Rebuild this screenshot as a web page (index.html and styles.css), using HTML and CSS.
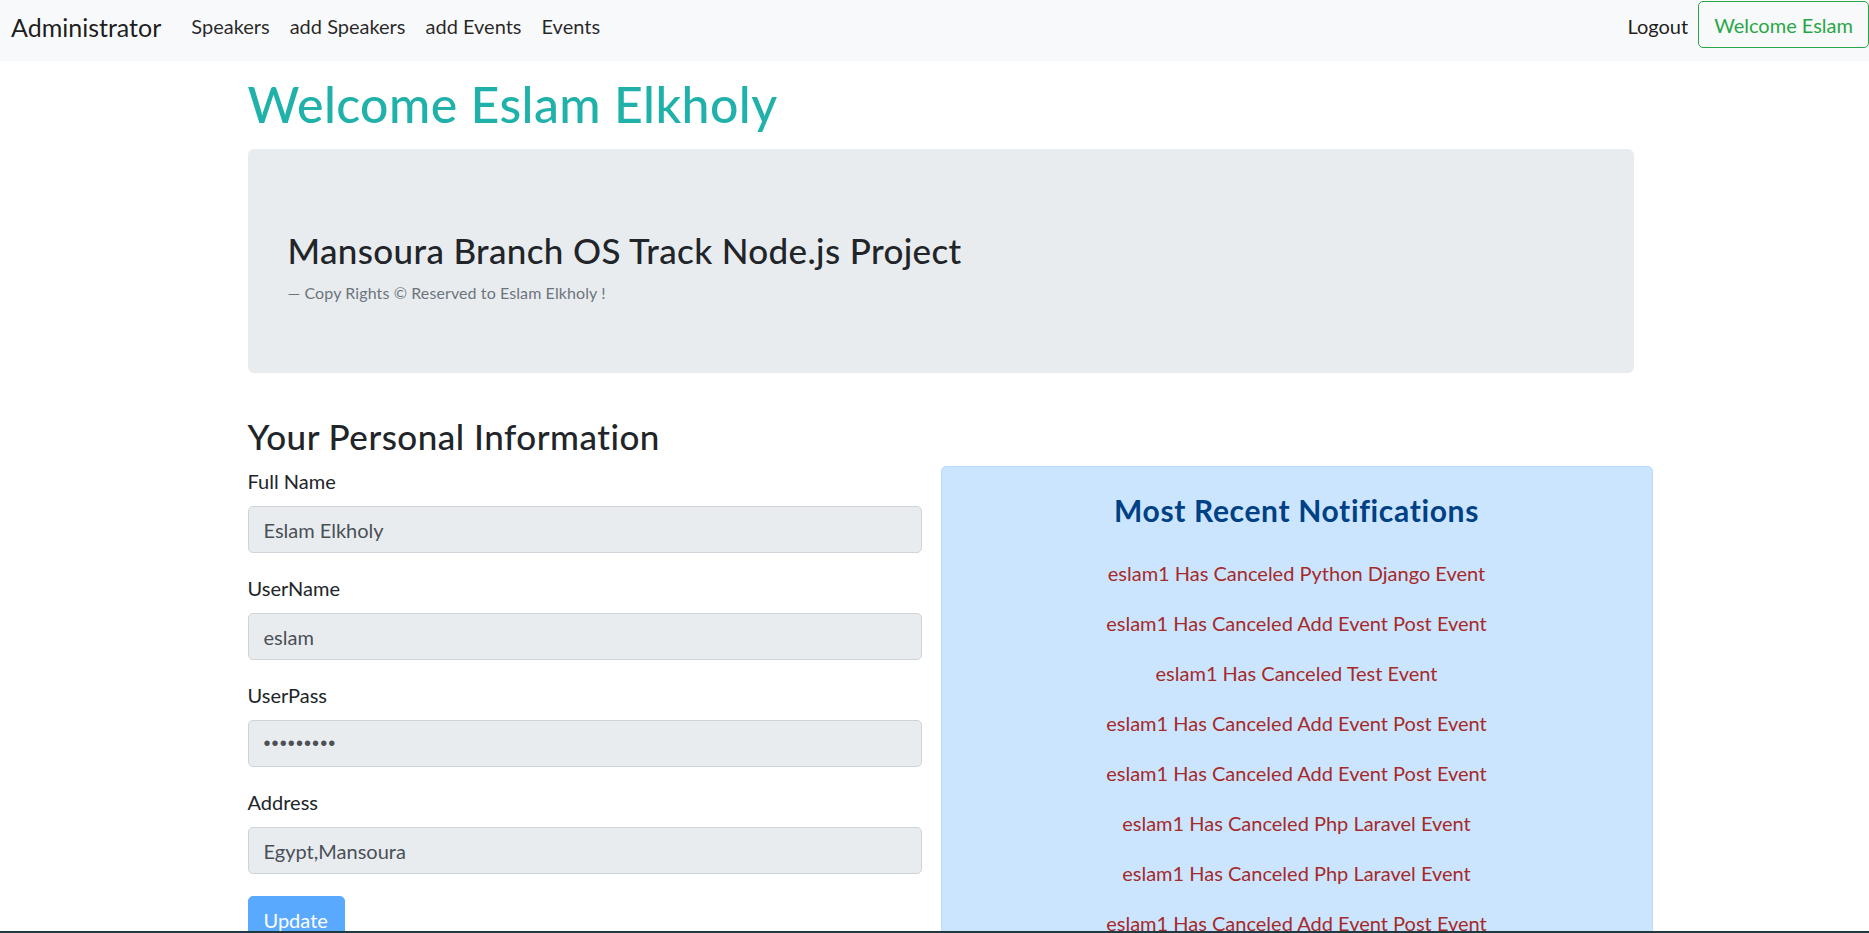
FILE: index.html
```html
<!DOCTYPE html>
<html lang="en">
<head>
<meta charset="utf-8">
<title>Administrator</title>
<link rel="stylesheet" href="styles.css">
</head>
<body>
<nav class="navbar">
  <a class="brand" href="#">Administrator</a>
  <ul class="nav-links">
    <li><a href="#">Speakers</a></li>
    <li><a href="#">add Speakers</a></li>
    <li><a href="#">add Events</a></li>
    <li><a href="#">Events</a></li>
  </ul>
  <div class="nav-right">
    <a class="logout" href="#">Logout</a>
    <button class="btn-welcome" type="button">Welcome Eslam</button>
  </div>
</nav>

<main class="container">
  <h1 class="welcome">Welcome Eslam Elkholy</h1>

  <div class="jumbotron">
    <h3 class="jumbo-title">Mansoura Branch OS Track Node.js Project</h3>
    <footer class="jumbo-footer">— Copy Rights © Reserved to Eslam Elkholy !</footer>
  </div>

  <h3 class="section-title">Your Personal Information</h3>

  <div class="row">
    <form class="info-form">
      <div class="form-group">
        <label>Full Name</label>
        <input class="form-control" type="text" value="Eslam Elkholy" readonly>
      </div>
      <div class="form-group">
        <label>UserName</label>
        <input class="form-control" type="text" value="eslam" readonly>
      </div>
      <div class="form-group">
        <label>UserPass</label>
        <input class="form-control form-password" type="password" value="123456789" readonly>
      </div>
      <div class="form-group">
        <label>Address</label>
        <input class="form-control" type="text" value="Egypt,Mansoura" readonly>
      </div>
      <button class="btn-update" type="button">Update</button>
    </form>

    <aside class="notifications">
      <h4 class="notif-title">Most Recent Notifications</h4>
      <p class="notif">eslam1 Has Canceled Python Django Event</p>
      <p class="notif">eslam1 Has Canceled Add Event Post Event</p>
      <p class="notif">eslam1 Has Canceled Test Event</p>
      <p class="notif">eslam1 Has Canceled Add Event Post Event</p>
      <p class="notif">eslam1 Has Canceled Add Event Post Event</p>
      <p class="notif">eslam1 Has Canceled Php Laravel Event</p>
      <p class="notif">eslam1 Has Canceled Php Laravel Event</p>
      <p class="notif">eslam1 Has Canceled Add Event Post Event</p>
      <p class="notif">eslam1 Has Canceled Test Event</p>
      <p class="notif">eslam1 Has Canceled Python Django Event</p>
    </aside>
  </div>
</main>

<div class="bottom-line"></div>
</body>
</html>
```

FILE: styles.css
```css
* {
  box-sizing: border-box;
}

html, body {
  margin: 0;
  padding: 0;
}

body {
  font-family: Lato, "Open Sans", "Liberation Sans", sans-serif;
  font-size: 20px;
  line-height: 30px;
  color: #212529;
  background: #ffffff;
}

a {
  text-decoration: none;
  color: inherit;
}

/* ---------- Navbar ---------- */
.navbar {
  display: flex;
  align-items: flex-start;
  height: 61px;
  padding: 0 0 0 11px;
  background: #f8f9fa;
}

.brand {
  font-size: 25px;
  line-height: 36px;
  padding-top: 9px;
  color: rgba(0, 0, 0, 0.9);
  margin-right: 20px;
  white-space: nowrap;
}

.nav-links {
  display: flex;
  list-style: none;
  margin: 0;
  padding: 11px 0 0 0;
}

.nav-links a {
  display: block;
  padding: 0 10px;
  color: rgba(0, 0, 0, 0.85);
  white-space: nowrap;
}

.nav-right {
  margin-left: auto;
  display: flex;
  align-items: flex-start;
}

.logout {
  padding: 11px 10px 0 10px;
  color: rgba(0, 0, 0, 0.9);
  white-space: nowrap;
}

.btn-welcome {
  margin-top: 1px;
  font-family: inherit;
  font-size: 20px;
  line-height: 30px;
  padding: 7.5px 15px;
  color: #28a745;
  background: transparent;
  border: 1px solid #28a745;
  border-radius: 5px;
  white-space: nowrap;
  flex-shrink: 0;
}

/* ---------- Container ---------- */
.container {
  width: 1386px;
  margin: 0 auto;
  padding: 0;
  position: relative;
  left: 6px;
}

.welcome {
  margin: 13px 0 15px 0;
  font-size: 50px;
  line-height: 60px;
  font-weight: 500;
  letter-spacing: 0.4px;
  color: #20b2aa;
}

.jumbotron {
  background: #e9ecef;
  border-radius: 6px;
  padding: 80px 40px 68px 40px;
  margin-bottom: 42px;
}

.jumbo-title {
  margin: 0 0 10px 0;
  font-size: 35px;
  line-height: 42px;
  font-weight: 500;
  letter-spacing: 0.35px;
  color: #212529;
}

.jumbo-footer {
  font-size: 16px;
  line-height: 24px;
  letter-spacing: 0.1px;
  color: #6c757d;
}

.section-title {
  margin: 0 0 9px 0;
  font-size: 35px;
  line-height: 42px;
  font-weight: 500;
  letter-spacing: 0.5px;
}

/* ---------- Row ---------- */
.row {
  display: flex;
  margin: 0 -19px;
  align-items: flex-start;
}

.info-form {
  flex: 0 0 50%;
  padding: 0 19px;
}

.form-group {
  margin-bottom: 20px;
}

.form-group label {
  display: block;
  margin-bottom: 10px;
}

.form-control {
  display: block;
  width: 100%;
  height: 47px;
  padding: 7.5px 15px;
  font-family: inherit;
  font-size: 20px;
  line-height: 30px;
  color: #495057;
  background: #e9ecef;
  border: 1px solid #ced4da;
  border-radius: 5px;
}

.form-password {
  font-family: "Liberation Sans", Arial, sans-serif;
  letter-spacing: 1.1px;
}

.btn-update {
  margin-top: 2px;
  font-family: inherit;
  font-size: 20px;
  line-height: 30px;
  padding: 7.5px 15px;
  color: #ffffff;
  background: #59a9ff;
  border: 1px solid #59a9ff;
  border-radius: 5px;
  width: 97px;
  text-align: left;
}

.notifications {
  flex: 0 0 50%;
  background: #cce5ff;
  border: 1px solid #b8daff;
  border-radius: 5px;
  padding: 25px 20px 10px 20px;
  text-align: center;
}

.notif-title {
  margin: 0 0 30px 0;
  font-size: 30px;
  line-height: 36px;
  font-weight: 700;
  letter-spacing: 0.65px;
  color: #004085;
}

.notif {
  margin: 0 0 20px 0;
  color: #a52a2a;
}

.bottom-line {
  position: fixed;
  left: 0;
  right: 0;
  bottom: 0;
  height: 2px;
  background: #1e3a40;
}
```
